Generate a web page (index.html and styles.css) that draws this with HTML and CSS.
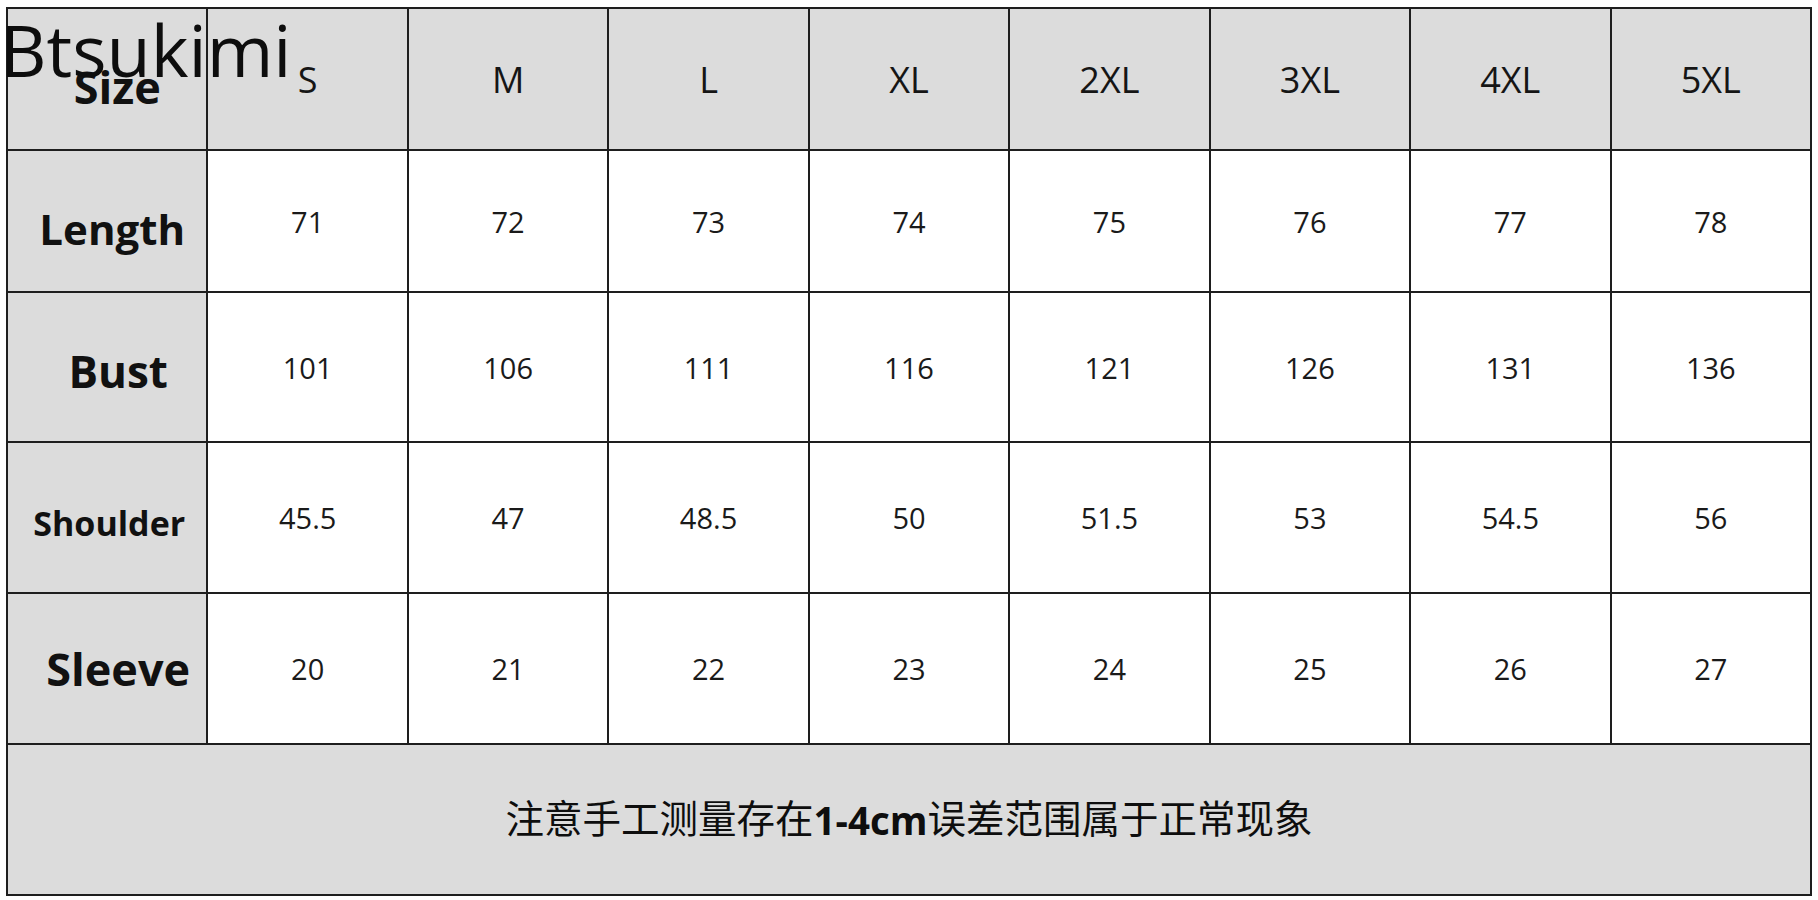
FILE: index.html
```html
<!DOCTYPE html>
<html lang="zh">
<head>
<meta charset="utf-8">
<title>Size Chart</title>
<link rel="stylesheet" href="styles.css">
</head>
<body>
<div class="page">
  <div class="chart">
    <div class="cell label l-size">Size</div>
    <div class="cell head">S</div>
    <div class="cell head">M</div>
    <div class="cell head">L</div>
    <div class="cell head">XL</div>
    <div class="cell head">2XL</div>
    <div class="cell head">3XL</div>
    <div class="cell head">4XL</div>
    <div class="cell head">5XL</div>

    <div class="cell label l-length">Length</div>
    <div class="cell val">71</div>
    <div class="cell val">72</div>
    <div class="cell val">73</div>
    <div class="cell val">74</div>
    <div class="cell val">75</div>
    <div class="cell val">76</div>
    <div class="cell val">77</div>
    <div class="cell val">78</div>

    <div class="cell label l-bust">Bust</div>
    <div class="cell val">101</div>
    <div class="cell val">106</div>
    <div class="cell val">111</div>
    <div class="cell val">116</div>
    <div class="cell val">121</div>
    <div class="cell val">126</div>
    <div class="cell val">131</div>
    <div class="cell val">136</div>

    <div class="cell label l-shoulder">Shoulder</div>
    <div class="cell val">45.5</div>
    <div class="cell val">47</div>
    <div class="cell val">48.5</div>
    <div class="cell val">50</div>
    <div class="cell val">51.5</div>
    <div class="cell val">53</div>
    <div class="cell val">54.5</div>
    <div class="cell val">56</div>

    <div class="cell label l-sleeve">Sleeve</div>
    <div class="cell val">20</div>
    <div class="cell val">21</div>
    <div class="cell val">22</div>
    <div class="cell val">23</div>
    <div class="cell val">24</div>
    <div class="cell val">25</div>
    <div class="cell val">26</div>
    <div class="cell val">27</div>

    <div class="cell note">注意手工测量存在<b class="range">1-4cm</b>误差范围属于正常现象</div>
  </div>
  <div class="brand">Btsukimi</div>
</div>
</body>
</html>
```

FILE: styles.css
```css
* { box-sizing: border-box; }

html, body {
  margin: 0;
  padding: 0;
  background: #ffffff;
}

.page {
  position: relative;
  width: 1818px;
  height: 900px;
  padding: 7px 0 0 6px;
  font-family: "Open Sans", "Noto Sans", "Liberation Sans", sans-serif;
  color: #151515;
}

.chart {
  width: 1806px;
  display: grid;
  grid-template-columns: repeat(9, 1fr);
  grid-template-rows: 140px 140px 148px 149px 149px 149px;
  gap: 2px;
  padding: 2px;
  background: #1e1e1e;
}

.cell {
  display: flex;
  align-items: center;
  justify-content: center;
  background: #ffffff;
  line-height: 1;
}

.head {
  background: #dcdcdc;
  font-size: 36px;
  font-weight: 400;
  padding-top: 2px;
}

.label {
  background: #dcdcdc;
  font-weight: 700;
  color: #111;
}

.l-size { font-size: 45px; padding: 14px 0 0 20px; }
.l-length { font-size: 42px; padding: 16px 0 0 10px; }
.l-bust { font-size: 44px; padding: 8px 0 0 22px; }
.l-shoulder { font-size: 34px; padding: 10px 0 0 4px; }
.l-sleeve { font-size: 45px; padding: 0 0 0 22px; }

.val {
  font-size: 29px;
  font-weight: 400;
  color: #1a1a1a;
}

.note {
  grid-column: 1 / -1;
  background: #dcdcdc;
  font-family: "Liberation Serif", "Noto Sans CJK SC", serif;
  font-size: 38.5px;
  font-weight: 400;
  color: #0e0e0e;
  padding-top: 2px;
}

.range {
  font-family: "Open Sans", "Liberation Sans", sans-serif;
  font-weight: 700;
  font-size: 38.5px;
}

.brand {
  position: absolute;
  top: 13px;
  left: 0;
  font-family: "Open Sans", "Noto Sans", sans-serif;
  font-size: 72px;
  line-height: 1;
  font-weight: 400;
  color: #0d0d0d;
}
```
